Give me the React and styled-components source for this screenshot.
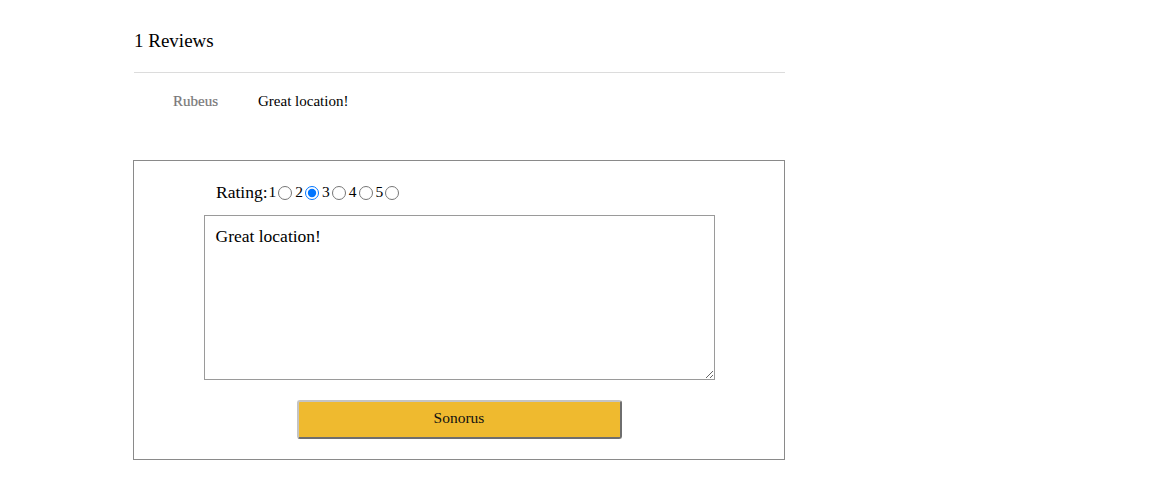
import React, { useState } from "react";
import styled, { createGlobalStyle } from "styled-components";

const GlobalStyle = createGlobalStyle`
  body {
    margin: 0;
    background: #fff;
    font-family: "Liberation Serif", "Times New Roman", serif;
    color: #000;
  }
`;

const Page = styled.main`
  width: 652px;
  margin-left: 133px;
  padding-top: 29px;
`;

const Heading = styled.h3`
  margin: 0 0 0 1px;
  font-size: 19px;
  font-weight: normal;
  line-height: 24px;
`;

const Divider = styled.div`
  height: 1px;
  background: #dcdcdc;
  margin: 19px 0 0 1px;
`;

const ReviewRow = styled.div`
  display: flex;
  align-items: center;
  padding: 19px 0 0 40px;
  font-size: 15px;
  line-height: 18px;
`;

const Author = styled.span`
  width: 85px;
  color: #777;
  -webkit-text-stroke: 0.2px #777;
`;

const FormBox = styled.form`
  margin-top: 50px;
  height: 298px;
  border: 1px solid #8a8a8a;
  display: flex;
  flex-direction: column;
  align-items: center;
`;

const RatingLine = styled.div`
  align-self: flex-start;
  margin: 20px 0 0 82px;
  height: 22px;
  display: flex;
  align-items: center;
  font-size: 17.5px;
  line-height: 22px;
`;

const Choice = styled.label`
  display: flex;
  align-items: center;
  font-size: 15.5px;
  padding-left: 1px;
  input {
    margin: 1px 2px 0 2px;
    width: 14px;
    height: 14px;
  }
`;

const TextBox = styled.textarea`
  margin-top: 12px;
  width: 511px;
  height: 165px;
  box-sizing: border-box;
  border: 1px solid #9a9a9a;
  padding: 9px 11px;
  font-family: "Liberation Serif", "Times New Roman", serif;
  font-size: 17.5px;
  line-height: 22px;
  outline: none;
`;

const Submit = styled.button`
  margin-top: 20px;
  width: 325px;
  height: 39px;
  padding: 0 0 3px;
  background: #efba2f;
  border: 2px solid;
  border-color: #c4c4c4 #6e6e6e #6e6e6e #c4c4c4;
  border-radius: 3px;
  font-family: "Liberation Serif", "Times New Roman", serif;
  font-size: 15.5px;
  color: #111;
`;

export default function App() {
  const [rating, setRating] = useState(2);
  const [text, setText] = useState("Great location!");

  return (
    <>
      <GlobalStyle />
      <Page>
        <Heading>1 Reviews</Heading>
        <Divider />
        <ReviewRow>
          <Author>Rubeus</Author>
          <span>Great location!</span>
        </ReviewRow>
        <FormBox onSubmit={(e) => e.preventDefault()}>
          <RatingLine>
            Rating:
            {[1, 2, 3, 4, 5].map((n) => (
              <Choice key={n}>
                {n}
                <input
                  type="radio"
                  name="rating"
                  checked={rating === n}
                  onChange={() => setRating(n)}
                />
              </Choice>
            ))}
          </RatingLine>
          <TextBox value={text} onChange={(e) => setText(e.target.value)} />
          <Submit type="submit">Sonorus</Submit>
        </FormBox>
      </Page>
    </>
  );
}
